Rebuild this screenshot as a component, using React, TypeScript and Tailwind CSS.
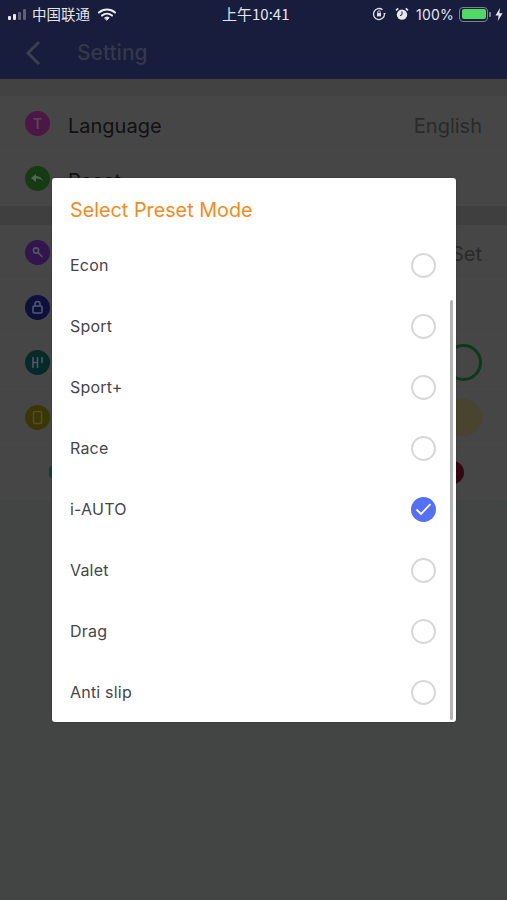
import React from "react";

const Ic = ({ bg, children }: { bg: string; children?: React.ReactNode }) => (
  <div className="w-[25px] h-[25px] rounded-full flex items-center justify-center shrink-0" style={{ background: bg }}>
    <svg width="25" height="25" viewBox="0 0 25 25" fill="none" stroke="#55556a" strokeWidth="1.6" strokeLinecap="round" strokeLinejoin="round">{children}</svg>
  </div>
);

const BgRow = ({ icon, label, right }: { icon: React.ReactNode; label?: string; right?: React.ReactNode }) => (
  <div className="h-[55px] flex items-center pl-[25px] pr-[25px] border-b border-[#484848]">
    {icon}
    {label && <span className="ml-[18px] mt-[6px] text-[20px] text-[#111114]">{label}</span>}
    <div className="ml-auto flex items-center">{right}</div>
  </div>
);

const options = ["Econ", "Sport", "Sport+", "Race", "i-AUTO", "Valet", "Drag", "Anti slip"];

export default function App() {
  return (
    <div className="relative w-[507px] h-[900px] overflow-hidden bg-[#434544] font-['Inter','Liberation_Sans',sans-serif]">
      <header className="h-[79px] bg-[#181d3e]">
        <div className="h-[28px] flex items-center relative text-[#e4e4ea] text-[14px]">
          <div className="ml-[8px] flex items-end gap-[2px] h-[11px]">
            <span className="w-[3px] h-[4px] bg-[#e8e8ee] rounded-[1px]" />
            <span className="w-[3px] h-[6px] bg-[#e8e8ee] rounded-[1px]" />
            <span className="w-[3px] h-[8px] bg-[#5d6079] rounded-[1px]" />
            <span className="w-[3px] h-[11px] bg-[#5d6079] rounded-[1px]" />
          </div>
          <span className="ml-[6px] text-[14.500px] font-['Noto_Sans_CJK_SC',sans-serif]">中国联通</span>
          <svg className="ml-[8px]" width="18" height="13" viewBox="0 0 18 13" fill="none" stroke="#ecedf2" strokeWidth="2" strokeLinecap="round">
            <path d="M1 4.5C5.6 0.4 12.4 0.4 17 4.5" />
            <path d="M4 7.6C6.9 5.2 11.1 5.2 14 7.6" />
            <path d="M9 12l2.2-2.2c-1.2-1-3.2-1-4.4 0z" fill="#ecedf2" strokeWidth="1" />
          </svg>
          <span className="absolute left-[222px] text-[15px] font-['Noto_Sans_CJK_SC','Inter',sans-serif]">上午10:41</span>
          <div className="ml-auto flex items-center mr-[4px]">
            <svg width="14" height="14" viewBox="0 0 14 14" fill="none" stroke="#dfe0e6" strokeWidth="1.3">
              <path d="M12.5 7A5.5 5.5 0 1 1 10.5 2.8" />
              <rect x="5" y="6" width="4" height="3.4" fill="#dfe0e6" stroke="none" />
              <path d="M5.8 6V4.9a1.2 1.2 0 0 1 2.4 0V6" strokeWidth="0.9" />
              <path d="M11 6l1.6 1.6L14 6z" fill="#dfe0e6" stroke="none" />
            </svg>
            <svg className="ml-[9px]" width="14" height="14" viewBox="0 0 14 14">
              <circle cx="7" cy="7.6" r="5.2" fill="#e6e7ec" />
              <path d="M7 4.5v3.2l-2 1" stroke="#1e2449" strokeWidth="1" fill="none" />
              <path d="M1 3.4L3.2 1.3M13 3.4L10.8 1.3" stroke="#e6e7ec" strokeWidth="1.6" />
            </svg>
            <span className="ml-[7px] text-[14px] tracking-[0.2px]">100%</span>
            <div className="ml-[5px] w-[29px] h-[15px] border border-[#7c7f92] rounded-[4px] p-[1.500px]">
              <div className="w-full h-full bg-[#50d964] rounded-[2px]" />
            </div>
            <span className="ml-[1px] w-[2px] h-[5px] bg-[#7c7f92] rounded-r-[1px]" />
            <svg className="ml-[4px]" width="8" height="13" viewBox="0 0 8 13">
              <path d="M5 0L0.5 7.4H3.6L2.8 13L7.6 5.2H4.4z" fill="#e4e4ea" />
            </svg>
          </div>
        </div>
        <div className="h-[51px] flex items-center pb-[2px]">
          <svg className="ml-[25px]" width="16" height="26" viewBox="0 0 16 26" fill="none" stroke="#3c3f50" strokeWidth="3">
            <path d="M14 2L3 13l11 11" />
          </svg>
          <span className="ml-[36px] text-[21px] font-medium text-[#353849]">Setting</span>
        </div>
      </header>

      <div className="bg-[#464646]">
        <div className="h-[17px] bg-[#424242]" />
        <BgRow label="Language"
          icon={<div className="w-[25px] h-[25px] rounded-full bg-[#4c1744] flex items-center justify-center text-[14px] font-semibold text-[#574659]">T</div>}
          right={<span className="mt-[6px] text-[20px] text-[#2a2a2a]">English</span>} />
        <BgRow label="Reset"
          icon={<Ic bg="#163b14"><path d="M6 12l5-4v8zM10 10c4 0 7 1.500 8 5-2-2-4-2.500-8-2.500" fill="#556555" stroke="none" /></Ic>} />
        <div className="h-[19px] bg-[#3f3f3f]" />
        <BgRow
          icon={<Ic bg="#32154c"><circle cx="11" cy="10.500" r="2.600" /><path d="M13 12.500l4 4" /></Ic>}
          right={<span className="mt-[3px] text-[20px] text-[#2a2a2a]">Set</span>} />
        <BgRow
          icon={<Ic bg="#0c103a"><rect x="8" y="11" width="9" height="7" rx="1" /><path d="M10 11V9a2.500 2.500 0 0 1 5 0v2" /></Ic>} />
        <BgRow
          icon={<Ic bg="#062a28"><path d="M8 7.500v10M12.500 7.500v10M8 12.500h4.500M17 7.500v5" /></Ic>}
          right={<div className="w-[37px] h-[37px] rounded-full border-[3px] border-[#0d381a]" />} />
        <BgRow
          icon={<Ic bg="#3b3605"><rect x="8.500" y="6.500" width="8" height="12" rx="1" stroke="#514d28" /></Ic>}
          right={<div className="w-[37px] h-[37px] rounded-full bg-[#48442f]" />} />
        <div className="h-[55px] relative">
          <div className="absolute left-[49px] top-[21px] w-[3px] h-[12px] rounded-l-full bg-[#0e3f31]" />
          <div className="absolute left-[440px] top-[16px] w-[24px] h-[23px] rounded-full bg-[#340610]" />
        </div>
      </div>

      {/* Dialog */}
      <div className="absolute left-[52px] top-[178px] w-[404px] h-[544px] bg-white rounded-[3px] shadow-[0_0_2px_rgba(0,0,0,0.3)]">
        <div className="h-[56px] flex items-center pl-[18px] pt-[10px] text-[19.800px] text-[#f58a1f]">Select Preset Mode</div>
        <div className="flex flex-col">
          {options.map((o) => (
            <div key={o} className="h-[61px] flex items-center pl-[18px] pr-[20px] text-[16px] tracking-[0.200px] text-[#46464a]">
              <span>{o}</span>
              {o === "i-AUTO" ? (
                <div className="ml-auto mt-[1px] w-[25px] h-[25px] rounded-full bg-[#5670f5] flex items-center justify-center">
                  <svg width="17" height="14" viewBox="0 0 17 14" fill="none" stroke="#fff" strokeWidth="1.800">
                    <path d="M1.500 7.500L6 12 15.500 2" />
                  </svg>
                </div>
              ) : (
                <div className="ml-auto mt-[1px] w-[25px] h-[25px] rounded-full border-2 border-[#d8d8d8]" />
              )}
            </div>
          ))}
        </div>
        <div className="absolute right-[3px] top-[122px] bottom-[2px] w-[3px] rounded-full bg-[#b4b4b4]" />
      </div>
    </div>
  );
}
